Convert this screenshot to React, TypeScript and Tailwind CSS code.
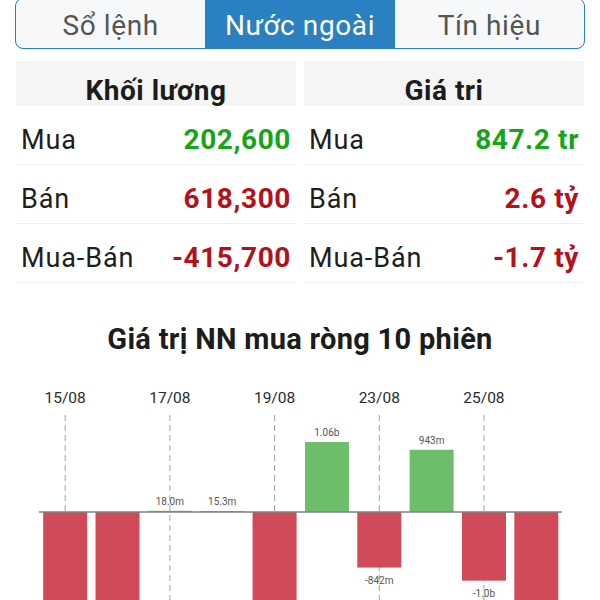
import React from "react"

type Row = { label: string; value: string; up: boolean }

const volumeRows: Row[] = [
  { label: "Mua", value: "202,600", up: true },
  { label: "Bán", value: "618,300", up: false },
  { label: "Mua-Bán", value: "-415,700", up: false },
]

const valueRows: Row[] = [
  { label: "Mua", value: "847.2 tr", up: true },
  { label: "Bán", value: "2.6 tỷ", up: false },
  { label: "Mua-Bán", value: "-1.7 tỷ", up: false },
]

// net foreign value per session, in billions
const sessions = [
  { value: -1.6 },
  { value: -1.6 },
  { value: 0.018, label: "18.0m" },
  { value: 0.0153, label: "15.3m" },
  { value: -1.6 },
  { value: 1.06, label: "1.06b" },
  { value: -0.842, label: "-842m" },
  { value: 0.943, label: "943m" },
  { value: -1.04, label: "-1.0b" },
  { value: -1.6 },
]

const dates = ["15/08", "17/08", "19/08", "23/08", "25/08"]

const StatTable: React.FC<{ title: string; rows: Row[] }> = ({ title, rows }) => (
  <div className="flex flex-col">
    <div className="h-[45px] overflow-hidden bg-[#f5f5f5] flex justify-center">
      <span className="pt-[16px] leading-none text-[28px] tracking-[0.5px] font-bold text-[#1c1c1c]">
        {title}
      </span>
    </div>
    {rows.map((row) => (
      <div
        key={row.label}
        className="h-[59px] border-b border-[#efefef] flex items-center justify-between px-[5px] pt-[10px]"
      >
        <span className="text-[27px] text-[#1e1e1e] tracking-[0.9px]">{row.label}</span>
        <span
          className={`text-[28px] tracking-[0.6px] font-bold ${
            row.up ? "text-[#16a516]" : "text-[#b3111b]"
          }`}
        >
          {row.value}
        </span>
      </div>
    ))}
  </div>
)

const NetChart: React.FC = () => {
  const left = 39
  const step = 52.35
  const barW = 44
  const zero = 132
  const scale = 66

  return (
    <svg width="600" height="220" viewBox="0 0 600 220" className="block">
      {dates.map((d, i) => {
        const x = left + step * (i * 2 + 0.5)
        return (
          <g key={d}>
            <text x={x} y={23} textAnchor="middle" fontSize="15.5" fill="#2a2a2a">
              {d}
            </text>
            <line x1={x} y1={35} x2={x} y2={220} stroke="#a0a0a0" strokeWidth="1" strokeDasharray="6 4" />
          </g>
        )
      })}
      {sessions.map((s, i) => {
        const x = left + step * i + (step - barW) / 2
        const h = Math.max(Math.abs(s.value) * scale, 1)
        const up = s.value >= 0
        return (
          <g key={i}>
            <rect
              x={x}
              y={up ? zero - h : zero}
              width={barW}
              height={h}
              fill={up ? "#6dbd6a" : "#d14a59"}
            />
            {s.label && (
              <text
                x={x + barW / 2}
                y={up ? zero - h - 6 : zero + h + 16}
                textAnchor="middle"
                fontSize="10"
                fill="#555"
              >
                {s.label}
              </text>
            )}
          </g>
        )
      })}
      <line x1={left} y1={zero} x2={562} y2={zero} stroke="#808080" strokeWidth="1.5" />
    </svg>
  )
}

export default function App() {
  return (
    <div className="w-[600px] h-[600px] overflow-hidden bg-white font-['Roboto',sans-serif]">
      <div className="mx-[15px] mt-[-2px] h-[51px] flex border border-[#2a7fbf] rounded-lg overflow-hidden bg-[#f7f8fa] text-[28px] tracking-[0.6px]">
        <div className="flex-1 flex items-center justify-center pt-[5px] text-[#555]">Sổ lệnh</div>
        <div className="flex-1 flex items-center justify-center pt-[5px] text-white bg-[#2a80c0]">
          Nước ngoài
        </div>
        <div className="flex-1 flex items-center justify-center pt-[5px] text-[#555]">Tín hiệu</div>
      </div>

      <div className="grid grid-cols-2 gap-x-2 px-4 mt-3">
        <StatTable title="Khối lương" rows={volumeRows} />
        <StatTable title="Giá tri" rows={valueRows} />
      </div>

      <div className="h-[97px] flex items-center justify-center pt-[17px]">
        <h2 className="text-[29px] tracking-[0.3px] font-bold text-[#1c1c1c]">Giá trị NN mua ròng 10 phiên</h2>
      </div>

      <NetChart />
    </div>
  )
}
